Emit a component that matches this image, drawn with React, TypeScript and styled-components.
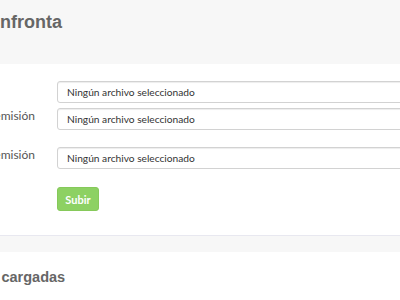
import React from "react";
import styled, { createGlobalStyle } from "styled-components";

const Global = createGlobalStyle`
  html, body { margin: 0; padding: 0; }
  body {
    background: #f7f7f7;
    font-family: Lato, "Open Sans", sans-serif;
    width: 400px;
    height: 300px;
    overflow: hidden;
  }
`;

const Page = styled.div`
  width: 400px;
  height: 300px;
  overflow: hidden;
  display: flex;
  flex-direction: column;
`;

const Header = styled.header`
  height: 64px;
  background: #f7f7f7;
  display: flex;
  align-items: flex-start;
  flex-shrink: 0;
`;

const Title = styled.h2<{ $shift: number; $size: number; $top: number }>`
  margin: ${(p) => p.$top}px 0 0 ${(p) => -p.$shift}px;
  font-family: "Liberation Sans", Arial, sans-serif;
  font-size: ${(p) => p.$size}px;
  font-weight: bold;
  color: #666;
  white-space: nowrap;
  line-height: 22px;
`;

const Panel = styled.section`
  background: #fff;
  flex-shrink: 0;
`;

const FormBody = styled.div`
  padding: 17px 0 24px;
  display: flex;
  flex-direction: column;
  margin-left: -140px;
`;

const Row = styled.div<{ $gap: number }>`
  display: grid;
  grid-template-columns: 175px 400px;
  column-gap: 22px;
  align-items: center;
  margin-bottom: ${(p) => p.$gap}px;
`;

const Label = styled.label`
  text-align: right;
  font-size: 12px;
  color: #555;
  white-space: nowrap;
  overflow: hidden;
  margin-top: -8px;
`;

const FileBox = styled.div`
  height: 22px;
  box-sizing: border-box;
  border: 1px solid #d2d2d2;
  border-radius: 3px;
  box-shadow: inset 0 1px 1px rgba(0, 0, 0, 0.075);
  padding-left: 9px;
  font-size: 10.2px;
  color: #333;
  display: flex;
  align-items: center;
  white-space: nowrap;
`;

const Button = styled.button`
  height: 24px;
  width: 42px;
  padding: 0;
  border: 1px solid #86c95a;
  border-radius: 3px;
  background: #8dd163;
  color: #fff;
  font-family: Lato, sans-serif;
  font-size: 11px;
  font-weight: bold;
`;

const Divider = styled.div`
  height: 16px;
  background: #f7f7f7;
  border-top: 1px solid #e8e8f0;
  flex-shrink: 0;
`;

const Panel2 = styled.section`
  background: #fff;
  flex: 1;
`;

const rows = [
  { label: "", gap: 5 },
  { label: "XML de emisión", gap: 17 },
  { label: "PDF de emisión", gap: 18 },
];

export default function App() {
  return (
    <>
      <Global />
      <Page>
        <Header>
          <Title $shift={24} $size={18} $top={11}>
            Confronta
          </Title>
        </Header>
        <Panel>
          <FormBody>
            {rows.map((r, i) => (
              <Row key={i} $gap={r.gap}>
                <Label>{r.label}</Label>
                <FileBox>Ningún archivo seleccionado</FileBox>
              </Row>
            ))}
            <Row $gap={0}>
              <span />
              <div>
                <Button>Subir</Button>
              </div>
            </Row>
          </FormBody>
        </Panel>
        <Divider />
        <Panel2>
          <Title $shift={63} $size={14.5} $top={14}>
            Facturas cargadas
          </Title>
        </Panel2>
      </Page>
    </>
  );
}
